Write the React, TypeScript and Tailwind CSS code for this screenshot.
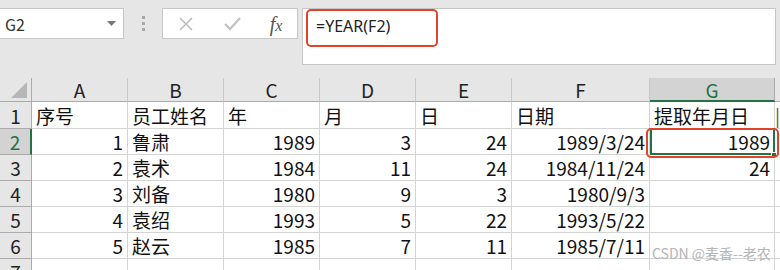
import React from "react";

const font = { fontFamily: '"Noto Sans CJK SC", "Noto Sans", sans-serif' };

const cols = ["A", "B", "C", "D", "E", "F", "G"];

type Cell = { v: string; num?: boolean };

const rows: Cell[][] = [
  [{ v: "序号" }, { v: "员工姓名" }, { v: "年" }, { v: "月" }, { v: "日" }, { v: "日期" }, { v: "提取年月日" }],
  [{ v: "1", num: true }, { v: "鲁肃" }, { v: "1989", num: true }, { v: "3", num: true }, { v: "24", num: true }, { v: "1989/3/24", num: true }, { v: "1989", num: true }],
  [{ v: "2", num: true }, { v: "袁术" }, { v: "1984", num: true }, { v: "11", num: true }, { v: "24", num: true }, { v: "1984/11/24", num: true }, { v: "24", num: true }],
  [{ v: "3", num: true }, { v: "刘备" }, { v: "1980", num: true }, { v: "9", num: true }, { v: "3", num: true }, { v: "1980/9/3", num: true }, { v: "" }],
  [{ v: "4", num: true }, { v: "袁绍" }, { v: "1993", num: true }, { v: "5", num: true }, { v: "22", num: true }, { v: "1993/5/22", num: true }, { v: "" }],
  [{ v: "5", num: true }, { v: "赵云" }, { v: "1985", num: true }, { v: "7", num: true }, { v: "11", num: true }, { v: "1985/7/11", num: true }, { v: "" }],
  [{ v: "" }, { v: "" }, { v: "" }, { v: "" }, { v: "" }, { v: "" }, { v: "" }],
];

function TopBar() {
  return (
    <div className="flex h-[78px] items-start bg-[#e6e6e6] pt-[8px]">
      <div className="flex h-[31px] w-[124px] items-center justify-between border border-l-0 border-[#c6c6c6] bg-white pl-[5px] pr-[7px]">
        <span className="text-[16px] text-[#333]">G2</span>
        <svg width="9" height="5" viewBox="0 0 9 5">
          <path d="M0 0 L9 0 L4.5 5 Z" fill="#777" />
        </svg>
      </div>
      <div className="flex h-[31px] w-[38px] flex-col items-center justify-center gap-[3px]">
        <span className="h-[3px] w-[3px] bg-[#a8a8a8]" />
        <span className="h-[3px] w-[3px] bg-[#a8a8a8]" />
        <span className="h-[3px] w-[3px] bg-[#a8a8a8]" />
      </div>
      <div className="flex h-[31px] w-[136px] items-center border border-[#c6c6c6] bg-white">
        <div className="flex w-[46px] justify-center">
          <svg width="16" height="16" viewBox="0 0 16 16">
            <path d="M2 2 L14 14 M14 2 L2 14" stroke="#bdbdbd" strokeWidth="1.6" />
          </svg>
        </div>
        <div className="flex w-[46px] justify-center">
          <svg width="17" height="14" viewBox="0 0 17 14">
            <path d="M1 7 L6 12 L16 1" stroke="#c3c3c3" strokeWidth="2.4" fill="none" />
          </svg>
        </div>
        <div className="flex w-[42px] justify-center">
          <span
            className="text-[20px] italic leading-none text-[#555]"
            style={{ fontFamily: '"Liberation Serif", "DejaVu Serif", serif' }}
          >
            f<span className="text-[16px]">x</span>
          </span>
        </div>
      </div>
      <div className="relative ml-[4px] h-[57px] w-[474px] border border-[#c6c6c6] bg-white">
        <span className="absolute left-[13px] top-[5px] text-[16px] text-[#222]" style={{ fontFamily: '"Noto Sans", sans-serif' }}>
          =YEAR(F2)
        </span>
        <div className="absolute left-[3px] top-[0px] h-[38px] w-[132px] rounded-[5px] border-2 border-[#e2432c]" />
      </div>
    </div>
  );
}

export default function App() {
  return (
    <div className="relative h-[270px] w-[780px] overflow-hidden bg-white" style={font}>
      <TopBar />
      <div className="relative grid grid-cols-[32px_96px_96px_96px_96px_96px_138px_125px_1fr] text-[19px] leading-none text-[#111]">
        {/* header row */}
        <div className="relative h-[24px] border-r border-b border-[#ababab] bg-[#e6e6e6]">
          <svg className="absolute bottom-[3px] right-[4px]" width="16" height="16" viewBox="0 0 16 16">
            <path d="M16 0 L16 16 L0 16 Z" fill="#b6b6b6" />
          </svg>
        </div>
        {cols.map((c) => (
          <div
            key={c}
            className={
              c === "G"
                ? "flex h-[24px] items-center justify-center border-r border-b-2 border-r-[#ababab] border-b-[#217346] bg-[#d3d3d3] text-[#217346]"
                : "flex h-[24px] items-center justify-center border-r border-b border-[#c8c8c8] border-b-[#ababab] bg-[#e6e6e6] text-[#222]"
            }
          >
            {c}
          </div>
        ))}
        <div className="h-[24px] border-b border-[#ababab] bg-[#e6e6e6]" />

        {rows.map((r, i) => {
          const h = i === 0 ? "h-[27px]" : "h-[26px]";
          const sel = i === 1;
          return (
            <React.Fragment key={i}>
              <div
                className={
                  sel
                    ? `flex ${h} items-end justify-center border-r-2 border-b border-r-[#217346] border-b-[#ababab] bg-[#d3d3d3] pb-[3px] text-[#217346]`
                    : `flex ${h} items-end justify-center border-r border-b border-[#ababab] bg-[#e6e6e6] pb-[3px] text-[#222]`
                }
              >
                {i + 1}
              </div>
              {r.map((cell, j) => (
                <div
                  key={j}
                  className={`flex ${h} items-end overflow-hidden whitespace-nowrap border-r border-b border-[#d4d4d4] px-[4px] pb-[3px] ${
                    cell.num ? "justify-end" : "justify-start"
                  }`}
                >
                  {cell.v}
                </div>
              ))}
              <div className={`flex ${h} items-end overflow-hidden whitespace-nowrap border-b border-[#d4d4d4] pb-[3px] text-[#7a4a10]`}>
                {i === 0 ? "|" : ""}
              </div>
            </React.Fragment>
          );
        })}

        {/* selection of G2 */}
        <div className="pointer-events-none absolute left-[650px] top-[50px] h-[27px] w-[125px] border-2 border-[#217346]" />
        <div className="pointer-events-none absolute left-[771px] top-[74px] h-[6px] w-[6px] border border-white bg-[#217346]" />
        <div className="pointer-events-none absolute left-[646px] top-[50px] h-[30px] w-[133px] rounded-[5px] border-2 border-[#e2432c]" />
      </div>
      <div className="pointer-events-none absolute left-[652px] top-[246px] text-[14px] leading-none text-[#b4b4b4]">
        CSDN @麦香--老农
      </div>
    </div>
  );
}
